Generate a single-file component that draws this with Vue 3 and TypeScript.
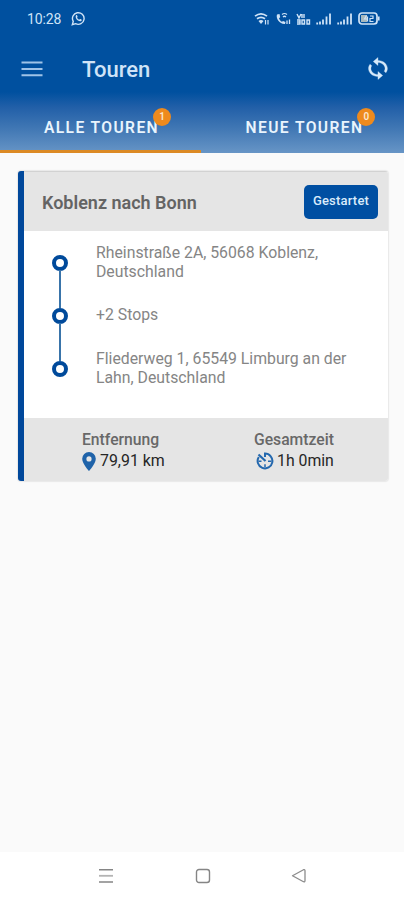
<script setup lang="ts">
import { ref } from 'vue'

interface Tab {
  id: string
  label: string
  count: number
}

interface Tour {
  title: string
  status: string
  stops: string[]
  distance: string
  duration: string
}

const tabs: Tab[] = [
  { id: 'all', label: 'ALLE TOUREN', count: 1 },
  { id: 'new', label: 'NEUE TOUREN', count: 0 },
]
const activeTab = ref('all')

const tour: Tour = {
  title: 'Koblenz nach Bonn',
  status: 'Gestartet',
  stops: [
    'Rheinstraße 2A, 56068 Koblenz, Deutschland',
    '+2 Stops',
    'Fliederweg 1, 65549 Limburg an der Lahn, Deutschland',
  ],
  distance: '79,91 km',
  duration: '1h 0min',
}
</script>

<template>
  <div class="screen">
    <header class="header">
      <div class="status-bar">
        <span class="clock">10:28</span>
        <svg class="chat" viewBox="0 0 16 16" width="15" height="15">
          <path d="M1.4 14.6l1-3.5a6.2 6.2 0 1 1 2.5 2.4z" fill="none" stroke="currentColor" stroke-width="1.5" />
          <path d="M5.4 4.6c.9-.6 1.2.2 1.6 1.4.1.5-.5.8-.5 1.1.5 1 1.3 1.7 2.3 2.1.4 0 .6-.8 1.1-.7 1.2.5 1.7.8 1.5 1.3-.5 1.6-2.2 1.5-4 .4C5.5 9 4.2 6.3 5.4 4.6z" fill="currentColor" />
        </svg>
        <div class="system">
          <svg viewBox="0 0 16 14" width="16" height="14">
            <path d="M1 4.200q6-4.600 12 0M3 6.800q4-3 8 0" fill="none" stroke="currentColor" stroke-width="1.700" />
            <path d="M4.500 9q2.500-1.800 5 0L7 12z" fill="currentColor" />
            <path d="M11.500 12.500V8M14 12.500V8" stroke="currentColor" stroke-width="1.200" />
          </svg>
          <svg viewBox="0 0 16 14" width="16" height="14">
            <path d="M2 2.500c-1.500 4 3 10 8 9.500l.5-2-2.500-1-1 .8c-1.500-.6-2.600-2-3-3.500l1.200-1L4.500 2z" fill="currentColor" />
            <path d="M7 2.500q2.500-2 5 0M8 5q1.500-1.500 3 0" fill="none" stroke="currentColor" stroke-width="1.200" />
            <path d="M12 12V8.500M14.500 12V7.500" stroke="currentColor" stroke-width="1.300" />
          </svg>
          <svg viewBox="0 0 15 14" width="15" height="14">
            <path d="M1 2l2 4 2-4M6 2v4M8 2v4M1 8h3v4H1M1 10h3M6 8h2.500v4H6zM11 8h2.500v4H11z" fill="none" stroke="currentColor" stroke-width="1.400" />
          </svg>
          <svg v-for="n in 2" :key="n" viewBox="0 0 16 14" width="16" height="14">
            <path d="M1.200 12.500v-2M4 12.500v-3M7 12.500v-5M10.500 12.500V4.500M14 12.500V1.500" stroke="currentColor" stroke-width="1.800" />
          </svg>
          <svg viewBox="0 0 22 13" width="22" height="13">
            <rect x="1" y="1" width="18" height="11" rx="3" fill="none" stroke="currentColor" stroke-width="1.700" />
            <path d="M3 3h6v7H3z" fill="#a7b8bd" />
            <path d="M20.800 4.500v4" stroke="currentColor" stroke-width="1.600" />
            <path d="M8.500 3.500L6.500 7H10M9.500 4.500v5M12 4h3v2.500h-3V9.500h3.500" fill="none" stroke="currentColor" stroke-width="1.200" />
          </svg>
        </div>
      </div>

      <div class="app-bar">
        <button class="icon-button menu" aria-label="Menü">
          <svg viewBox="0 0 22 16" width="22" height="16">
            <path d="M.5 1.500h21M.5 8h21M.5 14.300h21" stroke="currentColor" stroke-width="2" />
          </svg>
        </button>
        <h1>Touren</h1>
        <button class="icon-button sync" aria-label="Aktualisieren">
          <svg viewBox="2 0.500 20 23" width="20" height="23">
            <path d="M12 4V1L8 5l4 4V6c3.310 0 6 2.690 6 6 0 1.010-.25 1.970-.7 2.800l1.460 1.460C19.540 15.030 20 13.570 20 12c0-4.420-3.580-8-8-8zm0 14c-3.310 0-6-2.690-6-6 0-1.010.25-1.970.7-2.800L5.240 7.740C4.460 8.970 4 10.430 4 12c0 4.420 3.580 8 8 8v3l4-4-4-4v3z" fill="currentColor" stroke="currentColor" stroke-width=".3" transform="translate(-2.200 0) scale(1.180 1)" />
          </svg>
        </button>
      </div>

      <nav class="tabs">
        <button
          v-for="tab in tabs"
          :key="tab.id"
          class="tab"
          :class="{ active: tab.id === activeTab }"
          @click="activeTab = tab.id"
        >
          <span class="tab-label">{{ tab.label }}<span class="badge">{{ tab.count }}</span></span>
        </button>
      </nav>
    </header>

    <main class="content">
      <article class="card">
        <div class="card-head">
          <h2>{{ tour.title }}</h2>
          <button class="state">{{ tour.status }}</button>
        </div>
        <ol class="route">
          <li v-for="stop in tour.stops" :key="stop" class="stop">
            <span class="dot"></span>
            <span class="address">{{ stop }}</span>
          </li>
        </ol>
        <div class="card-foot">
          <div class="metric distance">
            <span class="metric-label">Entfernung</span>
            <span class="metric-value">
              <svg viewBox="0 0 14 19" width="14" height="19">
                <path d="M7 0a6.800 6.800 0 0 0-6.800 6.800C.2 11.700 7 19 7 19s6.800-7.300 6.800-12.200A6.800 6.800 0 0 0 7 0zm0 4.300a2.600 2.600 0 1 1 0 5.200 2.600 2.600 0 0 1 0-5.200z" fill="#1f63a9" />
              </svg>
              {{ tour.distance }}
            </span>
          </div>
          <div class="metric time">
            <span class="metric-label">Gesamtzeit</span>
            <span class="metric-value">
              <svg viewBox="0 0 18 18" width="18" height="18">
                <path d="M9 5V1.600A7.400 7.400 0 1 1 2.800 5" fill="none" stroke="#2468ae" stroke-width="2" />
                <path d="M2.500 2.500L9.500 9" fill="none" stroke="#2468ae" stroke-width="2.200" />
                <path d="M12 9.300h3.500M9 12.300v3M2.500 9.300h3" stroke="#2468ae" stroke-width="1.500" />
              </svg>
              {{ tour.duration }}
            </span>
          </div>
        </div>
      </article>
    </main>

    <footer class="system-nav">
      <svg viewBox="0 0 16 16" width="16" height="16">
        <path d="M1 1.700h14M1 14h14" stroke="#858585" stroke-width="1.500" />
        <path d="M1 7.800h14" stroke="#b4b4b4" stroke-width="1.800" />
      </svg>
      <svg viewBox="0 0 16 16" width="16" height="16">
        <rect x="1.500" y="1.500" width="13" height="13" rx="2.500" fill="none" stroke="#858585" stroke-width="1.400" />
      </svg>
      <svg viewBox="0 0 16 16" width="16" height="16">
        <path d="M1.500 7.700L12.500 1.700Q14 1.200 14 2.800v9.800Q14 14.200 12.500 13.700z" fill="none" stroke="#8c8c8c" stroke-width="1.300" stroke-linejoin="round" />
      </svg>
    </footer>
  </div>
</template>

<style>
body {
  margin: 0;
}
</style>

<style scoped>
.screen {
  display: flex;
  flex-direction: column;
  height: 900px;
  background: #fafafa;
  font-family: Roboto, "Liberation Sans", sans-serif;
}

button {
  border: 0;
  padding: 0;
  background: none;
  color: inherit;
  font-family: inherit;
}

.header {
  box-sizing: border-box;
  display: flex;
  flex-direction: column;
  height: 153px;
  background: linear-gradient(#00509f 0, #00509f 92px, #215fa8 107px, #4379b5 130px, #6795c6 153px);
  color: #cfe3f7;
}

.status-bar {
  display: flex;
  align-items: center;
  height: 37px;
  padding: 0 24px 0 27px;
}

.clock {
  width: 44px;
  font-size: 14px;
  letter-spacing: -0.1px;
}

.system {
  display: flex;
  align-items: center;
  gap: 5px;
  margin-left: auto;
}

.app-bar {
  display: flex;
  align-items: center;
  height: 63px;
  padding: 0 16px 0 21px;
}

.icon-button {
  display: flex;
}

.menu {
  color: #9fc3e8;
}

h1 {
  margin: 0 auto 0 39px;
  padding-top: 2px;
  font-size: 22px;
  font-weight: 500;
  line-height: 28px;
}

.sync {
  color: #d6e9fa;
}

.tabs {
  display: flex;
  height: 53px;
}

.tab {
  box-sizing: border-box;
  flex: 1;
  padding: 5px 0 0 2px;
  border-bottom: 3px solid transparent;
  color: #e9f4fd;
  font-size: 15.600px;
  font-weight: 600;
  letter-spacing: 1.400px;
}

.tab + .tab {
  padding-left: 4px;
}

.tab.active {
  border-color: #dc8a24;
}

.tab-label {
  position: relative;
}

.badge {
  position: absolute;
  top: -11px;
  right: -12px;
  width: 18px;
  border-radius: 50%;
  background: #ee8a1d;
  color: #fbe8d0;
  font-size: 10px;
  line-height: 18px;
  letter-spacing: 0;
  text-align: center;
}

.content {
  flex: 1;
  padding: 18px 16px 0 18px;
}

.card {
  border-left: 6px solid #00489b;
  border-radius: 3px;
  background: #fff;
  box-shadow: 0 0 1px 1px #e8e8e8;
  overflow: hidden;
}

.card-head {
  box-sizing: border-box;
  display: flex;
  align-items: center;
  justify-content: space-between;
  height: 60px;
  padding: 0 10px 0 18px;
  border-top: 1px solid #d2d2d2;
  background: #e5e5e5;
}

h2 {
  margin: 0;
  padding-top: 1px;
  color: #646464;
  font-size: 18px;
  font-weight: 600;
}

.state {
  width: 74px;
  height: 34px;
  padding-bottom: 3px;
  border-radius: 5px;
  background: #004fa2;
  color: #d9ebfb;
  font-size: 13px;
  font-weight: 500;
  letter-spacing: 0.2px;
}

.route {
  display: flex;
  flex-direction: column;
  height: 187px;
  margin: 0;
  padding: 5px 24px 0 28px;
  box-sizing: border-box;
  list-style: none;
}

.stop {
  position: relative;
  display: flex;
  align-items: center;
  gap: 28px;
  height: 53px;
}

.stop:not(:last-child)::after {
  content: "";
  position: absolute;
  top: 34px;
  left: 7px;
  width: 2px;
  height: 38px;
  background: #3974aa;
}

.dot {
  box-sizing: border-box;
  flex: none;
  width: 16px;
  height: 16px;
  border: 4.500px solid #004a9b;
  border-radius: 50%;
}

.address {
  padding-bottom: 2px;
  color: #858585;
  font-size: 15.800px;
  line-height: 19px;
}

.card-foot {
  display: flex;
  box-sizing: border-box;
  height: 63px;
  padding: 11px 0 0 58px;
  background: #e5e5e5;
}

.metric {
  display: flex;
  flex-direction: column;
}

.distance {
  width: 172px;
}

.metric-label {
  color: #686868;
  font-size: 15.700px;
  font-weight: 500;
  line-height: 21px;
}

.metric-value {
  display: flex;
  align-items: center;
  gap: 4px;
  color: #262626;
  font-size: 15.900px;
  line-height: 22px;
}

.time .metric-value {
  gap: 3px;
  padding-left: 2px;
  font-size: 15.800px;
}

.system-nav {
  display: flex;
  align-items: center;
  justify-content: space-between;
  box-sizing: border-box;
  height: 48px;
  padding: 0 97px 0 98px;
  background: #fff;
}
</style>
